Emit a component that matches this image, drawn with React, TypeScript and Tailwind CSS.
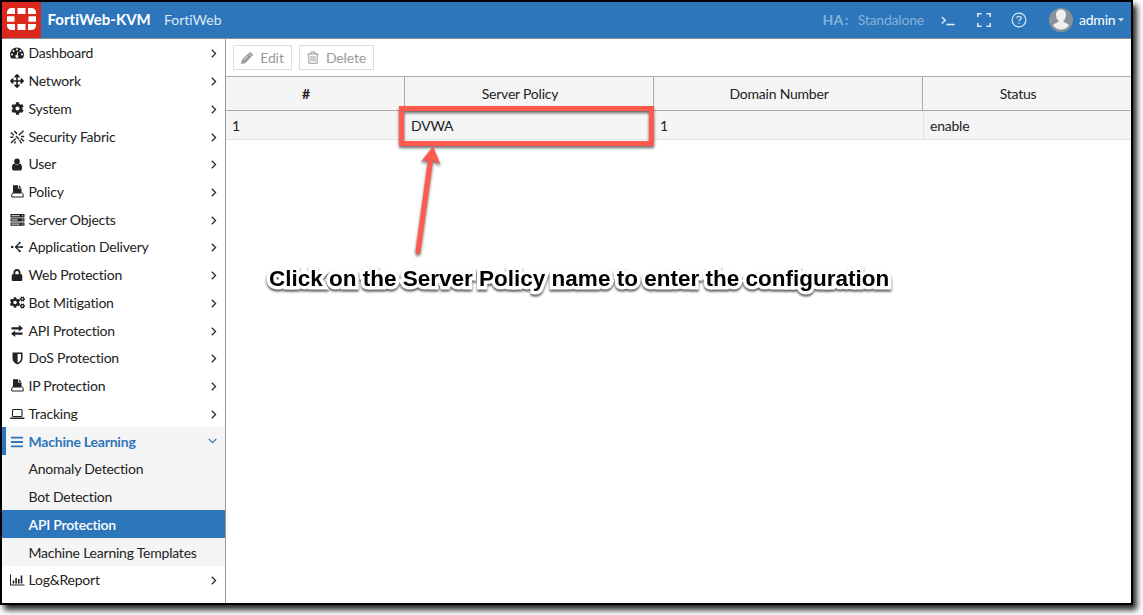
import type { ReactNode } from "react";
import { FaBars, FaCog, FaCogs, FaLock, FaArrowsAlt } from "react-icons/fa";

const Svg = ({ children, w = 14, h = 14 }: { children: ReactNode; w?: number; h?: number }) => (
  <svg width={w} height={h} viewBox={`0 0 ${w} ${h}`} fill="currentColor">
    {children}
  </svg>
);

const Gauge = () => (
  <Svg w={14} h={12}>
    <path d="M7 .6a7 7 0 0 1 7 7c0 1.400-.4 2.600-1.100 3.700-.1.200-.3.200-.5.200H1.600c-.2 0-.4-.1-.5-.2A7 7 0 0 1 7 .6Z" />
    <g fill="#fff">
      <circle cx="2" cy="7.600" r="1" />
      <circle cx="3.500" cy="4.100" r="1" />
      <circle cx="7" cy="2.600" r="1" />
      <circle cx="10.500" cy="4.100" r="1" />
      <circle cx="12" cy="7.600" r="1" />
      <path d="m8.500 4.700-.9 3.300a1.500 1.500 0 1 1-.9-.2l.9-3.300Z" />
    </g>
  </Svg>
);

const Fabric = () => (
  <Svg w={15} h={14}>
    <g stroke="currentColor" strokeWidth="1.400" fill="none">
      <path d="M.8 2.500 4 5.200M4.500 1 7 4M6 6l3 3.200M9.500 10l2 3.500M10.800 8.500l3.200 2.800M13.500.8 8.800 5.200M5.800 8.500 1 13M.3 7.300h3M11 6.500h3.200M5.500 11.500 4.500 13.500" />
    </g>
  </Svg>
);

const Person = () => (
  <Svg w={10} h={13}>
    <ellipse cx="5" cy="3.400" rx="2.800" ry="3" />
    <path d="M2.300 5.600C.7 5.900 0 7.600 0 10c0 1.600.7 2.600 2 2.600h6c1.300 0 2-1 2-2.600 0-2.400-.7-4.100-2.300-4.400a3.800 3.800 0 0 1-5.400 0Z" />
  </Svg>
);

const Doc = () => (
  <Svg w={13} h={13}>
    <path d="M2 .3h5.200v3.200h3.300v5H2Z" />
    <path d="M8 .3 10.500 2.800H8Z" />
    <path d="M2 7.500.8 9.500v2.500h11.400V9.500L11 7.500" fill="none" stroke="currentColor" strokeWidth="1" />
  </Svg>
);

const Servers = () => (
  <Svg w={15} h={12}>
    <path d="M.5 0h14v3.400H.5ZM.5 4.200h14v3.400H.5ZM.5 8.400h14v3.400H.5Z" />
    <path d="M1.500 1.700h8M1.500 5.900h6M1.500 10.100h8M12 1.700h1.200M12 5.900h1.200M12 10.100h1.200" stroke="#fff" strokeWidth=".9" />
  </Svg>
);

const Delivery = () => (
  <Svg w={14} h={12}>
    <path d="M1 4.900h2.200v2.200H1Z" />
    <path d="M5 6h7M5.500 6l3.800-3.600M5.500 6l3.800 3.600" fill="none" stroke="currentColor" strokeWidth="1.300" />
    <circle cx="9.700" cy="1.800" r="1.100" />
    <circle cx="12" cy="6" r="1.100" />
    <circle cx="9.700" cy="10.200" r="1.100" />
  </Svg>
);

const Swap = () => (
  <Svg w={12} h={12}>
    <path d="M.5 2.200h7.300V0L12 3.300 7.800 6.500V4.400H.5ZM11.500 7.600H4.200V5.500L0 8.700l4.200 3.300V9.800h7.300Z" />
  </Svg>
);

const Shield = () => (
  <Svg w={11} h={13}>
    <path d="M.5.5h10v6c0 2.900-2.400 4.800-5 6.100C2.900 11.300.5 9.400.5 6.500Z" />
    <path d="M5.600 2H9v4.500c0 1.900-1.400 3.200-3.400 4.300Z" fill="#fff" />
  </Svg>
);

const Laptop = () => (
  <Svg w={15} h={12}>
    <rect x="2.500" y="1.500" width="9.500" height="7" rx=".8" fill="none" stroke="currentColor" strokeWidth="1.100" />
    <path d="M0 9.600h14.500v.7c0 .5-.5.7-1 .7H1c-.5 0-1-.2-1-.7Z" />
  </Svg>
);

const Chart = () => (
  <Svg w={15} h={12}>
    <path d="M0 .5h1v10h13.500v1H0ZM2.700 6.500h1.600v3H2.700ZM5.300 4h1.600v5.500H5.300ZM8 5h1.600v4.500H8ZM10.700 1.500h1.600v8h-1.600Z" />
  </Svg>
);

const Chevron = ({ open = false }: { open?: boolean }) =>
  open ? (
    <svg width="9" height="6" viewBox="0 0 9 6" className="mr-2">
      <path d="m.7.8 3.800 3.800L8.300.8" fill="none" stroke="currentColor" strokeWidth="1.200" />
    </svg>
  ) : (
    <svg width="6" height="9" viewBox="0 0 6 9" className="mt-[2px] mr-2">
      <path d="m.8.8 3.800 3.700L.8 8.200" fill="none" stroke="currentColor" strokeWidth="1.200" />
    </svg>
  );

const menu: [string, ReactNode][] = [
  ["Dashboard", <Gauge />],
  ["Network", <FaArrowsAlt size={14} />],
  ["System", <FaCog size={13} />],
  ["Security Fabric", <Fabric />],
  ["User", <Person />],
  ["Policy", <Doc />],
  ["Server Objects", <Servers />],
  ["Application Delivery", <Delivery />],
  ["Web Protection", <FaLock size={12} />],
  ["Bot Mitigation", <FaCogs size={15} />],
  ["API Protection", <Swap />],
  ["DoS Protection", <Shield />],
  ["IP Protection", <Doc />],
  ["Tracking", <Laptop />],
];

const Item = ({ label, icon }: { label: string; icon: ReactNode }) => (
  <li className="flex h-[27.73px] items-center">
    <span className="ml-[7px] flex w-4 shrink-0 justify-center pt-px">{icon}</span>
    <span className="ml-[3.500px] grow pt-px">{label}</span>
    <Chevron />
  </li>
);

const Logo = () => (
  <svg width="39" height="36" viewBox="0 0 39 36" className="shrink-0 bg-[#da291c]">
    <g fill="#fff">
      <path d="M13 6v6H5V10.500A4.500 4.500 0 0 1 9.500 6ZM26 6h3.500A4.500 4.500 0 0 1 34 10.500V12h-8ZM5 22h8v6H9.500A4.500 4.500 0 0 1 5 23.500ZM26 22h8v1.500a4.500 4.500 0 0 1-4.500 4.500H26Z" />
      <path d="M15.500 6h8v6h-8ZM15.500 22h8v6h-8ZM5 14.300h7.500v5.400H5ZM26.500 14.300H34v5.400h-7.500Z" />
    </g>
  </svg>
);

const th = "flex items-center justify-center pr-[18px] border-[#aaa]";
const td = "flex items-center border-[#e2e2e2] pl-[6px] pt-0.5";
const sub = "flex h-[27.73px] items-center pl-[26.500px] pt-px";

export default function App() {
  return (
    <div className="relative h-[615px] w-[1143px] overflow-hidden bg-white font-['Lato',sans-serif] text-sm tracking-[-0.22px] text-[#222]">
      <div className="flex h-[605px] w-[1133px] flex-col border-2 border-black bg-white shadow-[4px_5px_6px_rgba(0,0,0,0.85)]">
        <header className="flex h-[37px] shrink-0 items-stretch border-b border-[#8c8c8c] bg-[#2d76bb] text-white">
          <Logo />
          <div className="flex grow items-center">
            <span className="ml-[6.500px] w-[105px] text-[15px] font-bold tracking-[0.01px]">FortiWeb-KVM</span>
            <span className="ml-[11.500px] tracking-[-0.01px] text-[#dce9f5]">FortiWeb</span>
            <span className="ml-auto flex gap-[9px] text-[#86b1da]">
              <b className="font-bold tracking-wide">HA<span className="ml-px">:</span></b>
              <span className="tracking-[-0.2px]">Standalone</span>
            </span>
            <svg width="14" height="12" viewBox="0 0 14 12" className="ml-[17px]" fill="none" stroke="#e6eff8" strokeWidth="1.300">
              <path d="m.8 3 3.500 3.200L.8 9.500M5.500 10.500h8" />
            </svg>
            <svg width="14" height="14" viewBox="0 0 14 14" className="ml-[22px]" fill="none" stroke="#dce9f5" strokeWidth="1.500">
              <path d="M.8 4V.8H4.500M9.500.8h3.700V4M13.200 10v3.200H9.500M4.500 13.200H.8V10" />
            </svg>
            <svg width="16" height="16" viewBox="0 0 16 16" className="ml-[20px]" fill="none" stroke="#dce9f5" strokeWidth="1.200">
              <circle cx="8" cy="8" r="6.900" />
              <path d="M5.900 6.300C5.900 3.600 10.100 3.600 10.100 6.200 10.100 7.700 8 7.700 8 9.300M8 10.700v1.300" />
            </svg>
            <svg width="24" height="24" viewBox="0 0 24 24" className="mb-px ml-[22px]">
              <circle cx="12" cy="12" r="12" fill="#88929a" />
              <path d="M12 1.500c3.300 0 5 2.200 5 5.300 0 3-1.200 4.700-2.600 6 .2 1.900 3.600 2.300 5.600 4.200-1.700 2.800-4.500 4.500-8 4.500s-6.300-1.700-8-4.500c2-1.900 5.400-2.300 5.600-4.200C8.200 11.500 7 9.800 7 6.800 7 3.700 8.700 1.500 12 1.500Z" fill="#eef0f2" />
            </svg>
            <span className="ml-1.5 w-[37px]">admin</span>
            <svg width="6" height="4" viewBox="0 0 6 4" className="mr-[7px] ml-0.5">
              <path d="M0 .3h6L3 3.500Z" fill="#dce9f5" />
            </svg>
          </div>
        </header>
        <div className="flex min-h-0 grow">
          <nav className="w-[224px] shrink-0 border-r border-[#999]">
            <ul>
              {menu.map(([label, icon]) => (
                <Item key={label} label={label} icon={icon} />
              ))}
              <li className="bg-[#f5f5f5]">
                <div className="flex h-[27.73px] items-center border-l-4 border-[#2d76bb] font-bold text-[#2d76bb]">
                  <span className="ml-[3px] flex w-4 justify-center pt-0.5">
                    <FaBars size={14} />
                  </span>
                  <span className="ml-[3.500px] grow pt-0.5">Machine Learning</span>
                  <Chevron open />
                </div>
                <div className={sub}>Anomaly Detection</div>
                <div className={sub}>Bot Detection</div>
                <div className={`${sub} bg-[#2d76bb] font-semibold text-white`}>API Protection</div>
                <div className="flex h-[27.73px] items-center pt-0.5 pl-[26.500px]">Machine Learning Templates</div>
              </li>
              <Item label="Log&Report" icon={<Chart />} />
            </ul>
          </nav>
          <main className="grow">
            <div className="flex h-[37px] items-center gap-[7px] pl-[7px] text-[#999]">
              <button className="flex h-[25px] w-[59px] items-center justify-center gap-[7px] border border-[#ddd] tracking-[-0.1px]">
                <svg width="12" height="12" viewBox="0 0 12 12" fill="currentColor">
                  <path d="m0 12 .8-4L7.500 1.300l3.200 3.200L4 11.200ZM8.300.5c.5-.5 1.200-.5 1.700 0l1.500 1.500c.5.500.5 1.200 0 1.700l-.5.500L7.800 1Z" />
                  <path d="m2.500 8.500 5-5" stroke="#fff" strokeWidth=".6" />
                </svg>
                Edit
              </button>
              <button className="flex h-[25px] w-[75px] items-center justify-center gap-[7px] border border-[#ddd] tracking-[-0.15px]">
                <svg width="12" height="13" viewBox="0 0 12 13" fill="none" stroke="currentColor">
                  <path d="M.5 3h11M4 3V1h4v2M1.800 3v9.300h8.400V3M4 5v5.500M6 5v5.500M8 5v5.500" />
                </svg>
                Delete
              </button>
            </div>
            <div className="grid h-[35px] grid-cols-[179px_249px_269px_1fr] border-y border-[#aaa] bg-[#f5f5f5] pt-px">
              <div className={`${th} -mt-px border-r font-bold`}>#</div>
              <div className={`${th} -mt-px border-r`}>Server Policy</div>
              <div className={`${th} -mt-px border-r`}>Domain Number</div>
              <div className={`${th} -mt-px`}>Status</div>
            </div>
            <div className="grid h-[29px] grid-cols-[179px_249px_270px_1fr] border-b border-[#e2e2e2] bg-[#f5f5f5]">
              <div className={`${td} border-r`}>1</div>
              <div className={`${td} border-r`}>DVWA</div>
              <div className={`${td} border-r`}>1</div>
              <div className={td}>enable</div>
            </div>
          </main>
        </div>
      </div>
      <svg className="pointer-events-none absolute top-[95px] left-[390px] drop-shadow-[0px_2px_1.5px_rgba(0,0,0,0.6)]" width="280" height="170" viewBox="390 95 280 170">
        <rect x="401.500" y="108.500" width="250" height="35" fill="none" stroke="#ff5a4d" strokeWidth="5" />
        <path d="M418 251.500 430.500 160" stroke="#ff5a4d" strokeWidth="5" strokeLinecap="round" />
        <path d="M433 146.500 440.500 164.500 431.500 159.500 421 161.500Z" fill="#ff5a4d" />
      </svg>
      <p className="absolute top-[265px] left-[269px] font-['Liberation_Sans',sans-serif] text-[22.500px] leading-[28px] font-bold tracking-normal whitespace-nowrap text-black drop-shadow-[0px_2px_1px_rgba(0,0,0,0.65)] [-webkit-text-stroke:7px_white] [paint-order:stroke_fill] [stroke-linejoin:round]">
        Click on the Server Policy name to enter the configuration
      </p>
    </div>
  );
}
